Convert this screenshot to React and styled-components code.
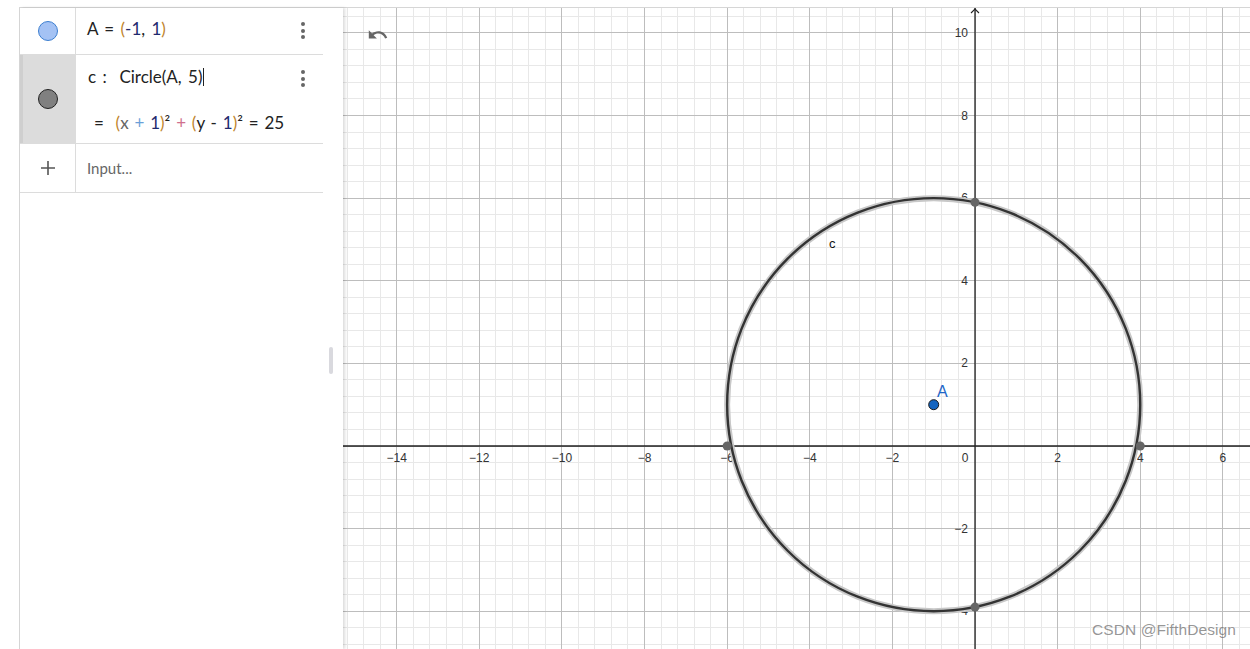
import React from "react";
import styled, { createGlobalStyle } from "styled-components";

const GlobalStyle = createGlobalStyle`
  html, body { margin: 0; padding: 0; background: #fff; }
  body { font-family: "Lato", "Noto Sans", sans-serif; overflow: hidden; }
  * { box-sizing: border-box; }
`;

const Page = styled.div`
  width: 1250px;
  height: 649px;
  padding: 7px 0 0 19px;
  display: flex;
  background: #fff;
`;

const Frame = styled.div`
  flex: 1;
  display: flex;
  border-top: 1px solid #d6d6d6;
  border-left: 1px solid #d6d6d6;
  min-width: 0;
`;

const AlgebraPanel = styled.div`
  width: 323px;
  flex: none;
  display: flex;
  position: relative;
  z-index: 1;
  background: #fff;
  box-shadow: 2px 0 3px rgba(0, 0, 0, 0.14);
`;

const List = styled.div`
  width: 303px;
  display: flex;
  flex-direction: column;
`;

const Row = styled.div`
  display: flex;
  height: ${(p) => p.$h}px;
  border-bottom: 1px solid #dcdcdc;
`;

const Marker = styled.div`
  width: 56px;
  flex: none;
  display: flex;
  align-items: center;
  justify-content: center;
  border-right: 1px solid #dcdcdc;
  background: ${(p) => (p.$selected ? "#dcdcdc" : "#fff")};
  box-shadow: ${(p) => (p.$selected ? "inset 3px 0 0 #cfcfcf" : "none")};
`;

const Dot = styled.div`
  width: 20px;
  height: 20px;
  border-radius: 50%;
  background: ${(p) => p.$fill};
  border: 1.5px solid ${(p) => p.$stroke};
`;

const Content = styled.div`
  flex: 1;
  display: flex;
  flex-direction: column;
  justify-content: ${(p) => (p.$top ? "flex-start" : "center")};
  padding: ${(p) => (p.$top ? "12px 0 0 12px" : `0 0 ${p.$pb || 0}px 11px`)};
  position: relative;
  min-width: 0;
`;

const Formula = styled.div`
  font-size: 17px;
  word-spacing: 2px;
  color: #222;
  line-height: 20px;
  white-space: pre;
  display: flex;
  align-items: center;
  height: 20px;
`;

const Output = styled(Formula)`
  margin-top: 26px;
  padding-left: 6px;
  word-spacing: 1.5px;
`;

const C = styled.span`
  color: ${(p) => p.$c};
`;

const Caret = styled.span`
  display: inline-block;
  width: 1px;
  height: 18px;
  background: #222;
  margin-left: 1px;
`;

const Placeholder = styled.div`
  font-size: 15px;
  color: #666;
`;

const Menu = styled.div`
  position: absolute;
  right: 18px;
  top: ${(p) => p.$top}px;
  display: flex;
  flex-direction: column;
  gap: 2.5px;
  & > span {
    width: 4px;
    height: 4px;
    border-radius: 50%;
    background: #666;
  }
`;

const Side = styled.div`
  flex: 1;
  display: flex;
  align-items: center;
  justify-content: flex-start;
`;

const Handle = styled.div`
  width: 4px;
  height: 27px;
  border-radius: 2px;
  background: #d9d9de;
  margin-left: 6px;
  margin-top: 64px;
`;

const Graphics = styled.div`
  flex: 1;
  position: relative;
  overflow: hidden;
`;

const Watermark = styled.div`
  position: absolute;
  right: 14px;
  bottom: 10px;
  font-family: "Liberation Sans", Arial, sans-serif;
  font-size: 15.5px;
  letter-spacing: 0.1px;
  color: rgba(105, 105, 105, 0.7);
`;

const S = 41.31;
const X0 = 975;
const Y0 = 446;
const px = (u) => X0 + u * S;
const py = (u) => Y0 - u * S;

function Grid() {
  const minor = [];
  const major = [];
  for (let i = -40; i <= 18; i++) {
    const x = px(i * 0.4);
    const isMajor = i % 5 === 0;
    const el = (
      <line key={"v" + i} x1={x} x2={x} y1={0} y2={649} stroke={isMajor ? "#bdbdbd" : "#e8e8e8"} strokeWidth={1} />
    );
    (isMajor ? major : minor).push(el);
  }
  for (let j = -13; j <= 27; j++) {
    const y = py(j * 0.4);
    const isMajor = j % 5 === 0;
    const el = (
      <line key={"h" + j} x1={340} x2={1250} y1={y} y2={y} stroke={isMajor ? "#bdbdbd" : "#e8e8e8"} strokeWidth={1} />
    );
    (isMajor ? major : minor).push(el);
  }
  return (
    <g shapeRendering="crispEdges">
      {minor}
      {major}
    </g>
  );
}

const labelStyle = { fontFamily: "'Liberation Sans', Arial, sans-serif", fontSize: 12, fill: "#333" };

function Axes() {
  const xl = [-14, -12, -10, -8, -6, -4, -2, 2, 4, 6];
  const yl = [10, 8, 6, 4, 2, -2, -4];
  const fmt = (n) => (n < 0 ? "\u2212" + Math.abs(n) : String(n));
  return (
    <g>
      <line x1={340} x2={1250} y1={Y0} y2={Y0} stroke="#222" strokeWidth={1.3} />
      <line x1={X0} x2={X0} y1={8} y2={649} stroke="#222" strokeWidth={1.3} />
      <path d={`M ${X0 - 4} 13 L ${X0} 9 L ${X0 + 4} 13`} fill="none" stroke="#222" strokeWidth={1.1} />
      {xl.map((n) => (
        <text key={"x" + n} x={px(n)} y={462} textAnchor="middle" style={labelStyle}>
          {fmt(n)}
        </text>
      ))}
      <text x={965} y={462} textAnchor="middle" style={labelStyle}>0</text>
      {yl.map((n) => (
        <text key={"y" + n} x={968} y={py(n) + 4} textAnchor="end" style={labelStyle}>
          {fmt(n)}
        </text>
      ))}
    </g>
  );
}

function Plot() {
  const cx = px(-1);
  const cy = py(1);
  const r = 5 * S;
  const r24 = Math.sqrt(24);
  const pts = [
    [px(-6), Y0],
    [px(4), Y0],
    [X0, py(1 + r24)],
    [X0, py(1 - r24)],
  ];
  return (
    <g>
      <circle cx={cx} cy={cy} r={r} fill="none" stroke="#c8c8c8" strokeWidth={6} />
      <circle cx={cx} cy={cy} r={r} fill="none" stroke="#333" strokeWidth={2.4} />
      {pts.map(([x, y], i) => (
        <circle key={i} cx={x} cy={y} r={4.5} fill="#666" />
      ))}
      <text x={829} y={248} style={{ fontFamily: "'Liberation Sans', Arial, sans-serif", fontSize: 13, fill: "#111" }}>c</text>
      <circle cx={cx} cy={cy} r={5} fill="#1565c0" stroke="#1a1a1a" strokeWidth={1} />
      <text x={937} y={397} style={{ fontFamily: "'Liberation Sans', Arial, sans-serif", fontSize: 16, fill: "#1e66c8" }}>A</text>
    </g>
  );
}

function UndoIcon() {
  return (
    <g transform="translate(367 24) scale(0.9)" fill="#666">
      <path d="M12.5 8c-2.65 0-5.05.99-6.9 2.6L2 7v9h9l-3.62-3.62c1.39-1.16 3.16-1.880 5.12-1.88 3.54 0 6.55 2.31 7.6 5.5l2.37-.78C21.08 11.03 17.15 8 12.5 8z" />
    </g>
  );
}

const ORANGE = "#c0842c";
const NAVY = "#1f2a6e";

export default function App() {
  return (
    <>
      <GlobalStyle />
      <Page>
        <Frame>
          <AlgebraPanel>
            <List>
              <Row $h={47}>
                <Marker>
                  <Dot $fill="#a4c2f4" $stroke="#3d7fd0" />
                </Marker>
                <Content $pb={4}>
                  <Formula>
                    <span>A = </span>
                    <C $c={ORANGE}>(</C>
                    <C $c={NAVY}>-1</C>
                    <span>, </span>
                    <C $c={NAVY}>1</C>
                    <C $c={ORANGE}>)</C>
                  </Formula>
                  <Menu $top={14}>
                    <span /><span /><span />
                  </Menu>
                </Content>
              </Row>
              <Row $h={89}>
                <Marker $selected>
                  <Dot $fill="#808080" $stroke="#222" />
                </Marker>
                <Content $top>
                  <Formula>
                    <span>c :  Circle(A, 5)</span>
                    <Caret />
                  </Formula>
                  <Output>
                    <span>=  </span>
                    <C $c={ORANGE}>(</C>
                    <C $c="#666">x</C>
                    <C $c="#6a9fd8"> + </C>
                    <C $c={NAVY}>1</C>
                    <C $c={ORANGE}>)</C>
                    <span>²</span>
                    <C $c="#d0708e"> + </C>
                    <C $c={ORANGE}>(</C>
                    <span>y - </span>
                    <C $c={NAVY}>1</C>
                    <C $c={ORANGE}>)</C>
                    <span>² = 25</span>
                  </Output>
                  <Menu $top={15}>
                    <span /><span /><span />
                  </Menu>
                </Content>
              </Row>
              <Row $h={49}>
                <Marker>
                  <svg width="16" height="16" viewBox="0 0 16 16">
                    <path d="M8 1 V15 M1 8 H15" stroke="#555" strokeWidth="1.6" />
                  </svg>
                </Marker>
                <Content>
                  <Placeholder>Input...</Placeholder>
                </Content>
              </Row>
            </List>
            <Side>
              <Handle />
            </Side>
          </AlgebraPanel>
          <Graphics>
            <svg width="907" height="641" viewBox="343 8 907 641" style={{ display: "block" }}>
              <rect x="343" y="8" width="907" height="641" fill="#fff" />
              <Grid />
              <Axes />
              <Plot />
              <UndoIcon />
            </svg>
            <Watermark>CSDN @FifthDesign</Watermark>
          </Graphics>
        </Frame>
      </Page>
    </>
  );
}
